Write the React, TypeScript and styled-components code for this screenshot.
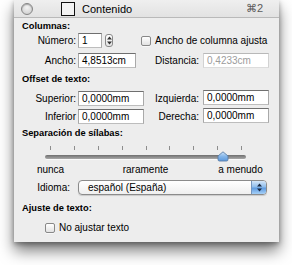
import React from 'react'
import styled, { createGlobalStyle } from 'styled-components'

const GlobalStyle = createGlobalStyle`
    html, body {
        margin: 0;
        padding: 0;
        background: #ffffff;
    }
    body {
        font-family: "Liberation Sans", Arial, sans-serif;
        font-size: 10px;
        color: #000;
    }
`

const Stage = styled.div`
    padding: 0 13px 0 14px;
    height: 265px;
`

const Panel = styled.div`
    width: 265px;
    height: 242px;
    background: #ededed;
    box-shadow: 0 9px 14px rgba(0, 0, 0, 0.5), 0 2px 5px rgba(0, 0, 0, 0.35);
    display: flex;
    flex-direction: column;
`

const TitleBar = styled.div`
    height: 17px;
    display: flex;
    align-items: center;
    padding: 0 16px 0 7px;
    background: linear-gradient(#efefef, #e2e2e2);
    border-bottom: 1px solid #b9b9b9;
`

const CloseDot = styled.div`
    width: 10px;
    height: 10px;
    border-radius: 50%;
    border: 1px solid #858585;
    background: radial-gradient(circle at 50% 35%, #f4f4f4, #c9c9c9);
    box-shadow: inset 0 1px 1px rgba(0, 0, 0, 0.25);
`

const TitleBox = styled.div`
    width: 12px;
    height: 12px;
    margin-left: 28px;
    border: 1px solid #111;
    background: #f3f3f3;
`

const Title = styled.span`
    margin-left: 7px;
    font-size: 11px;
    flex: 1;
`

const Shortcut = styled.span`
    font-size: 11px;
    color: #5a5a5a;
`

const Body = styled.div`
    padding: 0 10px 0 8px;
    display: flex;
    flex-direction: column;
`

const Heading = styled.div<{ $top: number }>`
    margin-top: ${({ $top }) => $top}px;
    font-weight: bold;
    font-size: 9.3px;
    line-height: 11px;
`

const Row = styled.div<{ $top: number }>`
    margin-top: ${({ $top }) => $top}px;
    height: 15px;
    display: flex;
    align-items: center;
`

const Label = styled.span<{ $width: number; $gap?: number }>`
    width: ${({ $width }) => $width}px;
    text-align: right;
    margin-right: ${({ $gap }) => $gap ?? 2}px;
    white-space: nowrap;
`

const Field = styled.div<{ $width: number; $disabled?: boolean; $shift?: number }>`
    width: ${({ $width }) => $width}px;
    height: 15px;
    box-sizing: border-box;
    margin-top: ${({ $shift }) => $shift || 0}px;
    padding: 1px 0 0 3px;
    line-height: 12px;
    background: #fff;
    border: 1px solid;
    border-color: ${({ $disabled }) =>
        $disabled ? '#b8b8b8 #d2d2d2 #dcdcdc #d2d2d2' : '#6f6f6f #a9a9a9 #bdbdbd #a9a9a9'};
    color: ${({ $disabled }) => ($disabled ? '#9c9c9c' : '#000')};
    white-space: nowrap;
    overflow: hidden;
`

const Stepper = styled.div`
    width: 8px;
    height: 13px;
    margin-left: 3px;
    box-sizing: border-box;
    border: 1px solid #8a8a8a;
    border-radius: 3px;
    background: linear-gradient(#ffffff, #e4e4e4);
    display: flex;
    align-items: center;
    justify-content: center;
`

const RightGroup = styled.div`
    margin-left: auto;
    display: flex;
    align-items: center;
`

const RightLabel = styled.span`
    width: 55px;
    text-align: right;
    margin-right: 4px;
    white-space: nowrap;
`

const CheckLine = styled.label<{ $left: number }>`
    margin-left: ${({ $left }) => $left}px;
    display: flex;
    align-items: center;
    white-space: nowrap;
`

const CheckBox = styled.span`
    width: 10px;
    height: 10px;
    box-sizing: border-box;
    margin-right: 4px;
    border: 1px solid #888;
    border-radius: 2px;
    background: linear-gradient(#ffffff, #e2e2e2);
    box-shadow: 0 1px 0 rgba(255, 255, 255, 0.6);
`

const SliderBox = styled.div`
    margin: 7px 0 0 23px;
    width: 201px;
    position: relative;
    height: 15px;
`

const Ticks = styled.div`
    display: flex;
    justify-content: space-between;
    padding: 0 4px 0 5px;
`

const Tick = styled.span`
    width: 1px;
    height: 4px;
    background: #8d8d8d;
`

const Track = styled.div`
    margin-top: 5px;
    height: 4px;
    border-radius: 2px;
    background: linear-gradient(#6f6f6f, #a9a9a9);
    box-shadow: 0 1px 0 rgba(255, 255, 255, 0.7);
`

const Thumb = styled.svg`
    position: absolute;
    top: 5px;
    margin-left: -6px;
`

const Scale = styled.div`
    margin: 3px 0 0 -19px;
    display: grid;
    grid-template-columns: repeat(3, 95px);
    justify-items: center;
    line-height: 11px;
`

const PopUp = styled.div`
    width: 189px;
    height: 15px;
    box-sizing: border-box;
    border: 1px solid #8b8b8b;
    border-radius: 4px;
    background: linear-gradient(#ffffff, #efefef);
    box-shadow: 0 1px 1px rgba(0, 0, 0, 0.15);
    display: flex;
    align-items: stretch;
    overflow: hidden;
`

const PopUpText = styled.span`
    flex: 1;
    padding-left: 9px;
    line-height: 13px;
`

const PopUpArrows = styled.span`
    width: 14px;
    border-left: 1px solid #7494bd;
    background: linear-gradient(#d4e6f9, #8fbdec 45%, #5f9be0 55%, #a6d0f7);
    display: flex;
    align-items: center;
    justify-content: center;
`

const Arrows = ({ color }: { color: string }) => (
    <svg width="5" height="9" viewBox="0 0 5 9">
        <polygon points="2.5,0.5 5,3.5 0,3.5" fill={color} />
        <polygon points="0,5.5 5,5.5 2.5,8.5" fill={color} />
    </svg>
)

const ticks = Array.from({ length: 9 })
const sliderValue = 0.885

const App: React.FC = () => {
    return (
        <>
            <GlobalStyle />
            <Stage>
                <Panel>
                    <TitleBar>
                        <CloseDot />
                        <TitleBox />
                        <Title>Contenido</Title>
                        <Shortcut>⌘2</Shortcut>
                    </TitleBar>

                    <Body>
                        <Heading $top={3}>Columnas:</Heading>
                        <Row $top={1}>
                            <Label $width={54}>Número:</Label>
                            <Field $width={24}>1</Field>
                            <Stepper>
                                <Arrows color="#333" />
                            </Stepper>
                            <CheckLine $left={28}>
                                <CheckBox />
                                Ancho de columna ajusta
                            </CheckLine>
                        </Row>
                        <Row $top={5}>
                            <Label $width={54}>Ancho:</Label>
                            <Field $width={58}>4,8513cm</Field>
                            <RightGroup>
                                <RightLabel>Distancia:</RightLabel>
                                <Field $width={66} $disabled>0,4233cm</Field>
                            </RightGroup>
                        </Row>

                        <Heading $top={6}>Offset de texto:</Heading>
                        <Row $top={6}>
                            <Label $width={54}>Superior:</Label>
                            <Field $width={66}>0,0000mm</Field>
                            <RightGroup>
                                <RightLabel>Izquierda:</RightLabel>
                                <Field $width={66} $shift={-2}>0,0000mm</Field>
                            </RightGroup>
                        </Row>
                        <Row $top={3}>
                            <Label $width={54}>Inferior</Label>
                            <Field $width={66}>0,0000mm</Field>
                            <RightGroup>
                                <RightLabel>Derecha:</RightLabel>
                                <Field $width={66} $shift={-2}>0,0000mm</Field>
                            </RightGroup>
                        </Row>

                        <Heading $top={4}>Separación de sílabas:</Heading>
                        <SliderBox>
                            <Ticks>
                                {ticks.map((_, i) => (
                                    <Tick key={i} />
                                ))}
                            </Ticks>
                            <Track />
                            <Thumb
                                width="12"
                                height="11"
                                viewBox="0 0 12 11"
                                style={{ left: `${sliderValue * 100}%` }}
                            >
                                <defs>
                                    <linearGradient id="thumbFill" x1="0" y1="0" x2="0" y2="1">
                                        <stop offset="0" stopColor="#cfe4fa" />
                                        <stop offset="0.5" stopColor="#84b6ea" />
                                        <stop offset="1" stopColor="#5c98dc" />
                                    </linearGradient>
                                </defs>
                                <path
                                    d="M1 5 L6 0.8 L11 5 L11 8.5 Q11 10 9.5 10 L2.5 10 Q1 10 1 8.5 Z"
                                    fill="url(#thumbFill)"
                                    stroke="#5b7ea6"
                                    strokeWidth="0.9"
                                />
                            </Thumb>
                        </SliderBox>
                        <Scale>
                            <span>nunca</span>
                            <span>raramente</span>
                            <span>a menudo</span>
                        </Scale>
                        <Row $top={5}>
                            <Label $width={48} $gap={8}>Idioma:</Label>
                            <PopUp>
                                <PopUpText>español (España)</PopUpText>
                                <PopUpArrows>
                                    <Arrows color="#1b2a44" />
                                </PopUpArrows>
                            </PopUp>
                        </Row>

                        <Heading $top={8}>Ajuste de texto:</Heading>
                        <Row $top={6}>
                            <CheckLine $left={23}>
                                <CheckBox />
                                No ajustar texto
                            </CheckLine>
                        </Row>
                    </Body>
                </Panel>
            </Stage>
        </>
    )
}

export default App
